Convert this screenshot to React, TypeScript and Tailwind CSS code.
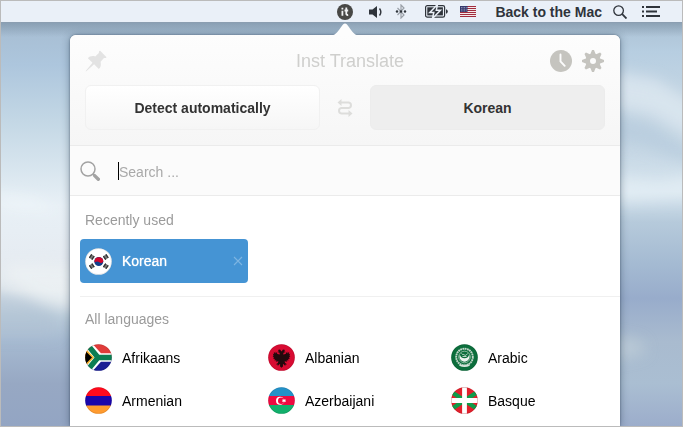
import React, { useId, useState } from "react";

type Language = { name: string; flag: React.ReactNode };

function Disc({ children }: { children: React.ReactNode }) {
  const id = useId();
  return (
    <svg viewBox="0 0 27 27" className="size-[27px] shrink-0" aria-hidden="true">
      <clipPath id={id}>
        <circle cx="13.5" cy="13.5" r="13.3" />
      </clipPath>
      <g clipPath={`url(#${id})`}>{children}</g>
      <circle cx="13.5" cy="13.5" r="13.1" fill="none" stroke="#000" strokeOpacity=".13" strokeWidth=".7" />
    </svg>
  );
}

const trigrams = [
  { x: 6.8, y: 9, a: -56 },
  { x: 20.8, y: 9, a: 56 },
  { x: 6.8, y: 18.2, a: 56 },
  { x: 20.8, y: 18.2, a: -56 },
];

const koreaFlag = (
  <>
    <rect width="27" height="27" fill="#fff" />
    <circle cx="13.8" cy="13.5" r="4.5" fill="#113f8c" />
    <path d="M9.5 12.4a4.500 4.500 0 0 1 8.800 1.400c-1.200 1.500-3 1.300-4.300.2-1.400-1-3-.8-4.200.6a4.500 4.500 0 0 1-.3-2.200z" fill="#d2052c" />
    {trigrams.map((t) => (
      <g key={`${t.x}-${t.y}`} transform={`translate(${t.x} ${t.y}) rotate(${t.a})`}>
        <rect x="-2.1" y="-2.1" width="4.2" height="4.2" fill="#777" />
        <path d="M-2.100-1.500h4.200M-2.100 1.500h4.200" stroke="#333" strokeWidth="1.200" />
      </g>
    ))}
  </>
);

const languages: Language[] = [
  {
    name: "Afrikaans",
    flag: (
      <>
        <rect width="27" height="14" fill="#e03c3a" />
        <rect y="13" width="27" height="14" fill="#1b1f94" />
        <path d="M1-1 14 13.500 1 28M12 13.500h16" stroke="#fff" strokeWidth="8.600" fill="none" />
        <path d="M1-1 13 13.500 1 28M11 13.500h17" stroke="#0d7d52" strokeWidth="5.400" fill="none" />
        <path d="M-1 3v21L9 13.500z" fill="#f9b52c" />
        <path d="M-1 5.500v16L7 13.500z" fill="#000" />
      </>
    ),
  },
  {
    name: "Albanian",
    flag: (
      <>
        <rect width="27" height="27" fill="#d80b32" />
        <path
          d="M13.500 7.500 12 5.500 9.800 6l1.200 1.200-1.800.8 2.300.8.300 1.700-2.300-.5-1.700-2.500-.3 2-1.700-1.700.4 2.400-1.400-.7.8 2.300-1 .1 1.400 1.700-1 .6 2 1-.8 1 2.300.2-.8 1.400 2.700-.5-.5 1.700-2 1.300 1.600.3.400 1.300 1.500-1.800.8.700-.3 1.500 1.600 1.400 1.600-1.400-.3-1.500.8-.7 1.500 1.800.4-1.300 1.600-.3-2-1.300-.5-1.700 2.700.5-.8-1.400 2.300-.2-.8-1 2-1-1-.6 1.400-1.700-1-.1.800-2.300-1.400.7.400-2.400-1.700 1.700-.3-2-1.700 2.500-2.300.5.300-1.700 2.300-.8-1.800-.8L17.200 6 15 5.500z"
          fill="#21090d"
        />
      </>
    ),
  },
  {
    name: "Arabic",
    flag: (
      <>
        <rect width="27" height="27" fill="#0c6e3c" />
        <circle cx="13.500" cy="13" r="8.300" fill="none" stroke="#c3d6ca" strokeWidth="1.900" strokeDasharray="1.800 .5" />
        <circle cx="13.500" cy="13" r="5.800" fill="none" stroke="#a9c9b5" strokeWidth=".8" />
        <path d="M9 10.500a5 5 0 1 0 9 0 4.500 3.800 0 0 1-9 0z" fill="#eef4f0" />
        <path d="M10.500 9.500c1 1.700 2 .3 3 1.500s2-.6 3.200-1.300M11.500 12.500h4" stroke="#cfe0d5" strokeWidth=".9" fill="none" />
        <path d="M8.500 21q5 2.200 10 0" stroke="#d8e5dc" strokeWidth="1.600" fill="none" />
      </>
    ),
  },
  {
    name: "Armenian",
    flag: (
      <>
        <rect width="27" height="9" fill="#ff0a1c" />
        <rect y="9" width="27" height="10" fill="#1a06ab" />
        <rect y="18.500" width="27" height="9" fill="#ff9b2f" />
      </>
    ),
  },
  {
    name: "Azerbaijani",
    flag: (
      <>
        <rect width="27" height="9" fill="#2391c8" />
        <rect y="9" width="27" height="9.500" fill="#ef0a40" />
        <rect y="18" width="27" height="9" fill="#12b06c" />
        <circle cx="12" cy="13.700" r="4" fill="#fff" />
        <circle cx="13.200" cy="13.700" r="3.200" fill="#ef0a40" />
        <path d="m16 11.700.6 1.100 1.300-.4-.5 1.300.5 1.300-1.300-.4-.6 1.100-.6-1.100-1.300.4.500-1.300-.5-1.300 1.300.4z" fill="#fff" />
      </>
    ),
  },
  {
    name: "Basque",
    flag: (
      <>
        <rect width="27" height="27" fill="#e2202c" />
        <path d="M-1 4 28 23M-1 23 28 4" stroke="#0f9c4a" strokeWidth="4.200" />
        <path d="M13.500 0v27M0 13.500h27" stroke="#fff" strokeWidth="4.800" />
      </>
    ),
  },
];

function Wallpaper() {
  return (
    <svg className="absolute inset-0 size-full" viewBox="0 0 681 425" preserveAspectRatio="none" aria-hidden="true">
      <defs>
        <linearGradient id="sky-left" x1="0" y1="0" x2="0" y2="1">
          <stop offset="0" stopColor="#a3b8cc" />
          <stop offset=".15" stopColor="#adc6dd" />
          <stop offset=".28" stopColor="#c3d7e5" />
          <stop offset=".4" stopColor="#d9e6ef" />
          <stop offset=".48" stopColor="#e8f0f6" />
          <stop offset=".6" stopColor="#e6ecf2" />
          <stop offset=".68" stopColor="#e2e9ee" />
          <stop offset=".74" stopColor="#bccddb" />
          <stop offset=".8" stopColor="#a6bad1" />
          <stop offset=".9" stopColor="#97a8c3" />
          <stop offset="1" stopColor="#93a5c3" />
        </linearGradient>
        <linearGradient id="sky-right" x1="0" y1="0" x2="0" y2="1">
          <stop offset="0" stopColor="#a3b8cb" />
          <stop offset=".12" stopColor="#b7cee1" />
          <stop offset=".24" stopColor="#c6d7e4" />
          <stop offset=".36" stopColor="#c8d9e6" />
          <stop offset=".45" stopColor="#d6e4ee" />
          <stop offset=".52" stopColor="#b6cadb" />
          <stop offset=".62" stopColor="#a4bad2" />
          <stop offset=".7" stopColor="#98accb" />
          <stop offset=".8" stopColor="#a9bbcf" />
          <stop offset=".9" stopColor="#aabed2" />
          <stop offset="1" stopColor="#9cadcb" />
        </linearGradient>
        <linearGradient id="bar-shade" x1="0" y1="0" x2="0" y2="1">
          <stop offset="0" stopColor="#5e7386" stopOpacity=".4" />
          <stop offset="1" stopColor="#5e7386" stopOpacity="0" />
        </linearGradient>
        <filter id="cloud" x="-50%" y="-50%" width="200%" height="200%">
          <feGaussianBlur stdDeviation="7" />
        </filter>
      </defs>
      <rect width="345" height="425" fill="url(#sky-left)" />
      <rect x="345" width="336" height="425" fill="url(#sky-right)" />
      <g filter="url(#cloud)">
        <path d="M-20 190 32 196 60 212 10 208z" fill="#f4f9fc" opacity=".5" />
        <path d="M10 262 80 265V312L45 300 0 275z" fill="#f0f3f5" opacity=".6" />
        <path d="M-20 285 30 300 55 315V335H-20z" fill="#adc0d1" opacity=".5" />
        <path d="M610 70 655 78 700 108V140L650 112 610 104z" fill="#dfeaf2" opacity=".7" />
        <path d="M610 112 650 122 700 155V165L640 145 610 142z" fill="#b3c8da" opacity=".6" />
        <path d="M610 175 660 180 700 172V196L610 202z" fill="#e8f1f7" opacity=".6" />
        <path d="M610 335 640 340 645 352 610 360z" fill="#c5d2da" opacity=".6" />
      </g>
      <rect y="22" width="681" height="14" fill="url(#bar-shade)" />
    </svg>
  );
}

function MenuBar() {
  return (
    <header className="relative flex h-[22px] items-center justify-end border-b border-[#8b9eb1] bg-[#eaf0f8] pr-[22px] text-[#2f343b]">
      <svg viewBox="0 0 16 16" className="size-4 shrink-0" aria-label="Inst Translate">
        <circle cx="8" cy="8" r="8" fill="#484846" />
        <path d="M5.400 6.700v5M5.400 3.800v1.700M9.300 3.500v6.300q0 1.500 1.900 1.100M7.500 6.500h3.700" fill="none" stroke="#f0f2f4" strokeWidth="1.800" />
      </svg>
      <svg viewBox="0 0 13 14" className="ml-4 h-[14px] w-[13px] shrink-0" aria-label="Volume">
        <path d="M0 4.500h3.500L8 1v12L3.500 9.500H0z" fill="currentColor" />
        <path d="M10.500 3.500q2.700 3.500 0 7" fill="none" stroke="currentColor" strokeWidth="1.400" />
      </svg>
      <svg viewBox="0 0 12 15" className="ml-[13px] h-[15px] w-3 shrink-0" aria-label="Bluetooth">
        <path d="m2.500 4 6.500 7L6 14V1l3 3-6.500 7" fill="none" stroke="#9aa0a8" strokeWidth="1.200" />
        <circle cx="2" cy="7.500" r="1.200" fill="currentColor" />
        <circle cx="6" cy="7.500" r="1.200" fill="currentColor" />
        <circle cx="10" cy="7.500" r="1.200" fill="currentColor" />
      </svg>
      <svg viewBox="0 0 23 13" className="ml-[18px] h-[13px] w-[23px] shrink-0" aria-label="Battery charging">
        <rect x=".6" y=".6" width="19" height="11.500" rx="1.700" fill="none" stroke="currentColor" strokeWidth="1.200" />
        <rect x="2.300" y="2.300" width="15.600" height="8.100" fill="currentColor" />
        <path d="M21 4.300q1.800.2 1.800 2.200T21 8.700z" fill="currentColor" />
        <path d="M12.500-.5 4.800 7.500h4L7.500 13.500l8-8.300h-4.200z" fill="currentColor" stroke="#eaf0f8" strokeWidth="1.500" />
      </svg>
      <svg viewBox="0 0 16 11" className="ml-3 h-[11px] w-4 shrink-0" aria-label="Keyboard: U.S.">
        <rect width="16" height="11" fill="#f3e9ea" />
        <path d="M0 .5h16M0 2.500h16M0 4.500h16M0 6.500h16M0 8.500h16M0 10.500h16" stroke="#a12c3e" />
        <rect width="7.500" height="6" fill="#34386c" />
        <path d="M1 1.500h6M1 3.200h6M1 4.900h6" stroke="#b9bdd6" strokeWidth=".8" strokeDasharray=".8 .8" />
      </svg>
      <span className="ml-[19px] text-sm font-bold whitespace-nowrap">Back to the Mac</span>
      <svg viewBox="0 0 14 14" className="ml-[11px] size-[14px] shrink-0" aria-label="Spotlight">
        <circle cx="5.600" cy="5.600" r="4.800" fill="none" stroke="currentColor" strokeWidth="1.300" />
        <path d="m9.200 9.200 4.300 4.300" stroke="currentColor" strokeWidth="1.800" />
      </svg>
      <svg viewBox="0 0 18 11" className="ml-[15px] h-[11px] w-[18px] shrink-0" aria-label="Notification Center">
        <path d="M0 1h2M0 5.500h2M0 10h2M4 1h14M4 5.500h11M4 10h14" stroke="currentColor" strokeWidth="1.800" />
      </svg>
    </header>
  );
}

function LanguageButton({ name, flag }: Language) {
  return (
    <button type="button" className="flex h-[43px] w-full items-center gap-2.5 pl-[5px] text-left text-sm text-black">
      <Disc>{flag}</Disc>
      {name}
    </button>
  );
}

export default function App() {
  const [query, setQuery] = useState("");
  return (
    <div className="relative flex min-h-screen flex-col overflow-hidden border border-[#bbb] font-['Liberation_Sans',Arial,sans-serif]">
      <Wallpaper />
      <MenuBar />
      <main className="relative mt-3 mr-[62px] ml-[69px] grow rounded-t-md bg-white shadow-[0_0_2px_rgba(30,50,70,.6),0_1px_9px_rgba(30,50,70,.45)]">
        <svg viewBox="0 0 26 13" className="absolute -top-3 left-1/2 h-[13px] w-[26px] -translate-x-1/2" aria-hidden="true">
          <path d="M0 12.500C4 11.500 5.500 9 11 1.500Q13-.5 15 1.500C20.500 9 22 11.500 26 12.500V13H0z" fill="#fdfdfd" />
        </svg>

        <section className="rounded-t-md border-b border-[#ebebeb] bg-linear-to-b from-[#fdfdfd] to-[#f6f6f6] px-[15px] pt-[15px] pb-[15px]">
          <div className="grid grid-cols-[1fr_auto_1fr] items-center">
            <button type="button" aria-label="Pin window" className="size-[22px]">
              <svg viewBox="0 0 22 22" className="size-full" aria-hidden="true">
                <path
                  d="M15.200.8 21.300 6.900c.4.800-.3 1.200-2.300 1.200l-3.400 3.700c.7 3.200.2 5.700-1.800 7.200l-4.700-4.700L1 21.400l-.3-.3 6.800-8.400L2.900 8.300c1.500-2 4-2.600 7.300-1.900l3.700-3.300c0-2 .5-2.700 1.300-2.300z"
                  fill="#e3e3e3"
                />
              </svg>
            </button>
            <h1 className="pl-2.5 text-lg leading-[22px] text-[#cfcfcd]">Inst Translate</h1>
            <div className="flex justify-end gap-2.5 pr-px">
              <button type="button" aria-label="History" className="size-[22px]">
                <svg viewBox="0 0 22 22" className="size-full" aria-hidden="true">
                  <circle cx="11" cy="11" r="11" fill="#c5c4bf" />
                  <path d="M10.500 4.500v6.800l4.200 4.500" fill="none" stroke="#fcfcfc" strokeWidth="1.900" strokeLinecap="round" />
                </svg>
              </button>
              <button type="button" aria-label="Settings" className="size-[22px]">
                <svg viewBox="-11 -11 22 22" className="size-full" fill="#c5c4bf" aria-hidden="true">
                  <path fillRule="evenodd" d="M-7.500 0a7.500 7.500 0 1 0 15 0a7.500 7.500 0 1 0-15 0zM-3 0a3 3 0 1 0 6 0a3 3 0 1 0-6 0z" />
                  {[0, 45, 90, 135, 180, 225, 270, 315].map((a) => (
                    <path key={a} transform={`rotate(${a})`} d="M-2.800-6.500-1-11h2l1.800 4.500z" />
                  ))}
                </svg>
              </button>
            </div>
          </div>

          <div className="mt-[13px] flex h-[45px] items-stretch">
            <button type="button" className="min-w-0 flex-1 rounded-md border border-[#f1f1f1] bg-linear-to-b from-white to-[#f6f6f6] text-sm font-bold text-[#333]">
              Detect automatically
            </button>
            <button type="button" aria-label="Swap languages" className="flex w-[50px] items-center justify-center">
              <svg viewBox="0 0 16 18" className="h-[18px] w-4" aria-hidden="true">
                <path d="M4 3.500h7.700a2.800 2.800 0 0 1 0 5.500H4.300a2.800 2.800 0 0 0 0 5.500H12" fill="none" stroke="#dddddb" strokeWidth="2" />
                <path d="M.5 3.500 4.500 0v7zM15.500 14.500l-4-3.500v7z" fill="#dddddb" />
              </svg>
            </button>
            <button type="button" className="min-w-0 flex-1 rounded-md border border-[#ececec] bg-[#eeeeee] text-sm font-bold text-[#333]">
              Korean
            </button>
          </div>
        </section>

        <label className="flex h-[50px] items-center border-b border-[#ebebeb] bg-[#fbfbfb] pl-2.5">
          <svg viewBox="0 0 20 20" className="size-5 shrink-0" role="img" aria-label="Search languages">
            <circle cx="8" cy="8" r="7" fill="none" stroke="#a2a2a2" strokeWidth="1.500" />
            <path d="m12.800 12.800 2 2" stroke="#a2a2a2" strokeWidth="1.600" />
            <path d="m14.600 14.600 3.700 3.700" stroke="#a2a2a2" strokeWidth="3.400" strokeLinecap="round" />
          </svg>
          <span className="ml-[18px] h-[18px] w-px bg-black" />
          <input
            type="text"
            value={query}
            onChange={(e) => setQuery(e.target.value)}
            placeholder="Search ..."
            className="min-w-0 flex-1 bg-transparent pt-0.5 text-sm outline-none placeholder:text-[#a9a9a9]"
          />
        </label>

        <section className="pt-[14px]">
          <h2 className="pl-[15px] text-sm text-[#9b9b9b]">Recently used</h2>
          <div className="mt-[9px] ml-2.5 grid grid-cols-3 gap-x-[15px] border-b border-[#f0f0f0] pr-1.5 pb-[13px]">
            <div className="flex h-11 items-center rounded-[4px] bg-[#4594d4] pr-[5px] pl-[5px]">
              <button type="button" className="flex grow items-center gap-2.5 text-sm text-white [text-shadow:0_0_1px_#fff]">
                <Disc>{koreaFlag}</Disc>
                Korean
              </button>
              <button type="button" aria-label="Remove Korean">
                <svg viewBox="0 0 10 10" className="size-2.5" aria-hidden="true">
                  <path d="m1 1 8 8M9 1 1 9" stroke="#7db5e2" strokeWidth="1.100" />
                </svg>
              </button>
            </div>
          </div>
        </section>

        <section className="pt-3 pb-1">
          <h2 className="pl-[15px] text-sm text-[#9b9b9b]">All languages</h2>
          <ul className="mt-[7px] grid grid-cols-3 gap-x-[15px] pr-1.5 pl-2.5">
            {languages.map((l) => (
              <li key={l.name}>
                <LanguageButton {...l} />
              </li>
            ))}
          </ul>
        </section>
      </main>
    </div>
  );
}
